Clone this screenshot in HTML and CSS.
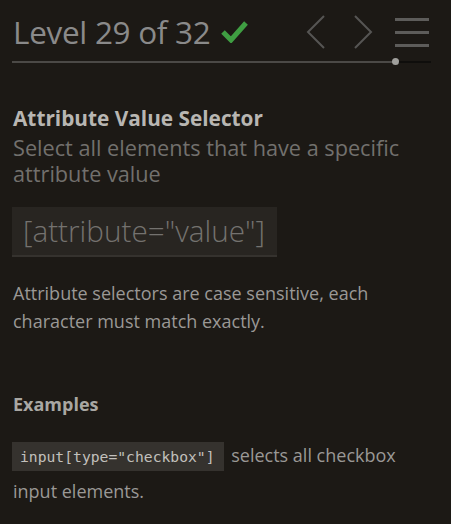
FILE: index.html
```html
<!DOCTYPE html>
<html>
<head>
<meta charset="utf-8">
<link rel="stylesheet" href="styles.css">
</head>
<body>
<div class="sidebar">
  <div class="header">
    <h2 class="level-title">Level 29 of 32 <svg class="check" width="27" height="23" viewBox="0 0 27 23"><polyline points="2,12 10,20 25,3" fill="none" stroke="#3f9e42" stroke-width="5"/></svg></h2>
    <div class="nav">
      <svg class="arrow" width="20" height="34" viewBox="0 0 20 34"><polyline points="18,1 2,17 18,33" fill="none" stroke="#565553" stroke-width="2"/></svg>
      <svg class="arrow" width="20" height="34" viewBox="0 0 20 34"><polyline points="2,1 18,17 2,33" fill="none" stroke="#565553" stroke-width="2"/></svg>
      <div class="menu"><span></span><span></span><span></span></div>
    </div>
  </div>
  <div class="progress">
    <div class="progress-fill" style="width:91.4%"></div>
    <div class="progress-dot"></div>
  </div>

  <h3 class="sel-name">Attribute Value Selector</h3>
  <p class="sel-title">Select all elements that have a specific attribute value</p>
  <div class="syntax">[attribute="value"]</div>
  <p class="hint">Attribute selectors are case sensitive, each character must match exactly.</p>

  <h4 class="examples-title">Examples</h4>
  <p class="example"><code>input[type="checkbox"]</code> selects all checkbox input elements.</p>
</div>
</body>
</html>
```
FILE: styles.css
```css
html, body {
  margin: 0;
  padding: 0;
  background: #1c1915;
}
body {
  font-family: "Open Sans", "Noto Sans", sans-serif;
  color: #999;
}
.sidebar {
  padding: 0 20px 0 12px;
}
.header {
  display: flex;
  align-items: center;
  justify-content: space-between;
  height: 48px;
  padding-top: 8px;
}
.level-title {
  margin: 0 0 0 1px;
  font-size: 31.5px;
  line-height: 40px;
  font-weight: 400;
  color: #8a8a8a;
  display: flex;
  align-items: center;
  gap: 11px;
  letter-spacing: -0.3px;
}
.check {
  display: block;
  margin-top: -2px;
}
.nav {
  display: flex;
  align-items: center;
  margin-right: 2px;
}
.arrow {
  display: block;
  margin-right: 27px;
}
.arrow + .arrow {
  margin-right: 22px;
}
.menu {
  display: flex;
  flex-direction: column;
  gap: 10px;
  width: 34px;
}
.menu span {
  display: block;
  height: 3px;
  background: #5d5c5a;
}
.progress {
  position: relative;
  height: 2px;
  margin-top: 5px;
  background: #0f0e0c;
}
.progress-fill {
  height: 2px;
  background: #4b4946;
}
.progress-dot {
  position: absolute;
  left: 91.4%;
  top: -3px;
  width: 7px;
  height: 7px;
  margin-left: -3px;
  border-radius: 50%;
  background: #a09f9c;
}
.sel-name {
  margin: 42px 0 0 1px;
  font-size: 20.8px;
  line-height: 26px;
  font-weight: 700;
  color: #b8b6b2;
}
.sel-title {
  margin: 4px 0 0 1px;
  font-size: 21.7px;
  line-height: 26px;
  color: #72706d;
}
.syntax {
  display: inline-block;
  margin-top: 20px;
  padding: 6px 12px 6px 11px;
  font-size: 29.7px;
  font-weight: 300;
  line-height: 36px;
  color: #74726f;
  background: #282521;
  border-bottom: 2px solid #35322e;
}
.hint {
  margin: 22px 0 0 1px;
  font-size: 18px;
  line-height: 28px;
  color: #9a9895;
}
.examples-title {
  margin: 57px 0 0 1px;
  font-size: 18px;
  line-height: 24px;
  font-weight: 700;
  color: #a9a7a3;
}
.example {
  margin: 22px 0 0 1px;
  font-size: 18px;
  line-height: 34px;
  color: #9a9895;
}
.example code {
  font-family: "DejaVu Sans Mono", monospace;
  font-size: 14.7px;
  color: #c2c0bc;
  background: #35322e;
  padding: 6px 9px 6px 8px;
  margin-right: 3px;
  margin-left: -1px;
}
```
